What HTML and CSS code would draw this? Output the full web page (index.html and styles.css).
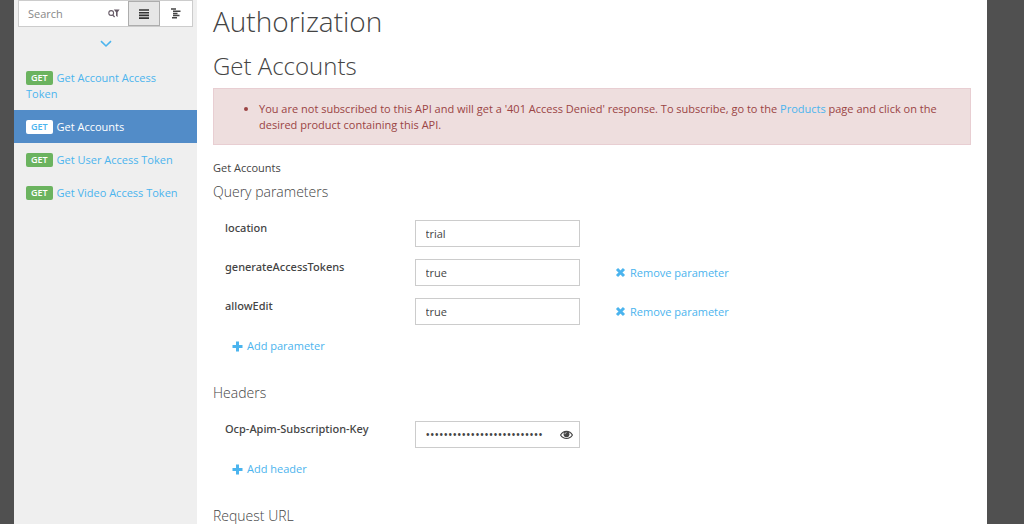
FILE: index.html
```html
<!DOCTYPE html>
<html lang="en">
<head>
    <title>Authorization - Get Accounts</title>
    <meta charset="UTF-8">
    <link rel="stylesheet" href="styles.css">
</head>
<body>
    <div class="page">
        <!-- Operations list -->
        <nav class="sidebar">
            <div class="search-group">
                <div class="search-box">
                    <input type="text" class="search-input" placeholder="Search" aria-label="Search">
                    <button type="button" class="filter-btn" aria-label="Filter">
                        <svg width="12" height="9" viewBox="0 0 12 9"><circle cx="3.2" cy="4" r="2.4" fill="none" stroke="#665a66" stroke-width="1.1"/><path d="M4.6 5.8L6.6 8" stroke="#665a66" stroke-width="1.2"/><path d="M5.8 0.5H11.6L9.6 3.2V8L8 6.8V3.2z" fill="#665a66"/></svg>
                    </button>
                </div>
                <button type="button" class="view-btn active" aria-label="List view">
                    <svg width="10" height="10" viewBox="0 0 10 10"><path d="M0 1H10M0 3.7H10M0 6.4H10M0 9.1H10" stroke="#333" stroke-width="1.6"/></svg>
                </button>
                <button type="button" class="view-btn" aria-label="Tree view">
                    <svg width="10" height="11" viewBox="0 0 10 11"><path d="M0 1H5M2 3.2H9.5M2 5.4H6.5M2 7.6H8.5M1 9.8H6" stroke="#444" stroke-width="1.5"/></svg>
                </button>
            </div>
            <button type="button" class="expand-btn" aria-label="Show more">
                <svg width="12" height="8" viewBox="0 0 12 8"><path d="M1 1.2L6 6L11 1.2" fill="none" stroke="#4bb4ee" stroke-width="1.6"/></svg>
            </button>
            <ul class="operations">
                <li><a href="#"><span class="badge">GET</span> Get Account Access Token</a></li>
                <li><a href="#" class="active"><span class="badge">GET</span> Get Accounts</a></li>
                <li><a href="#"><span class="badge">GET</span> Get User Access Token</a></li>
                <li><a href="#"><span class="badge">GET</span> Get Video Access Token</a></li>
            </ul>
        </nav>

        <!-- Console -->
        <main class="content">
            <h1>Authorization</h1>
            <h2>Get Accounts</h2>
            <div class="alert">
                <ul>
                    <li>You are not subscribed to this API and will get a '401 Access Denied' response. To subscribe, go to the <a href="#">Products</a> page and click on the desired product containing this API.</li>
                </ul>
            </div>
            <p class="description">Get Accounts</p>

            <form>
                <h3>Query parameters</h3>
                <div class="form-row">
                    <label for="location">location</label>
                    <div class="field"><input type="text" id="location" value="trial"></div>
                </div>
                <div class="form-row">
                    <label for="generateAccessTokens">generateAccessTokens</label>
                    <div class="field"><input type="text" id="generateAccessTokens" value="true"></div>
                    <a href="#" class="action"><svg width="11" height="11" viewBox="0 0 11 11"><path d="M2 2L9 9M9 2L2 9" stroke="#4bb4ee" stroke-width="3"/></svg>Remove parameter</a>
                </div>
                <div class="form-row">
                    <label for="allowEdit">allowEdit</label>
                    <div class="field"><input type="text" id="allowEdit" value="true"></div>
                    <a href="#" class="action"><svg width="11" height="11" viewBox="0 0 11 11"><path d="M2 2L9 9M9 2L2 9" stroke="#4bb4ee" stroke-width="3"/></svg>Remove parameter</a>
                </div>
                <a href="#" class="add"><svg width="11" height="11" viewBox="0 0 11 11"><path d="M5.5 0.5V10.5M0.5 5.5H10.5" stroke="#4bb4ee" stroke-width="3"/></svg>Add parameter</a>

                <h3>Headers</h3>
                <div class="form-row">
                    <label for="subscriptionKey">Ocp-Apim-Subscription-Key</label>
                    <div class="field key-field">
                        <input type="password" id="subscriptionKey" value="abcdefghijklmnopqrstuvwxyz">
                        <button type="button" class="eye-btn" aria-label="Show key">
                            <svg width="13" height="10" viewBox="0 0 13 10"><path d="M0.6 5C3.4 0.2 9.6 0.2 12.4 5C9.6 9.6 3.4 9.6 0.6 5z" fill="none" stroke="#444" stroke-width="1.2"/><circle cx="6.5" cy="4.2" r="2.9" fill="#444"/><path d="M5 4.2C5 3.2 5.6 2.6 6.5 2.6" fill="none" stroke="#fff" stroke-width="0.7"/></svg>
                        </button>
                    </div>
                </div>
                <a href="#" class="add"><svg width="11" height="11" viewBox="0 0 11 11"><path d="M5.5 0.5V10.5M0.5 5.5H10.5" stroke="#4bb4ee" stroke-width="3"/></svg>Add header</a>

                <h3>Request URL</h3>
            </form>
        </main>
    </div>
</body>
</html>
```

FILE: styles.css
```css
* {
    box-sizing: border-box;
}
body {
    margin: 0;
    padding: 0 37px 0 14px;
    background-color: #505050;
    color: #444;
    font-family: "Open Sans", "Noto Sans", sans-serif;
    font-size: 11px;
    line-height: 16px;
}
a {
    color: #4bb4ee;
    text-decoration: none;
}
ul {
    margin: 0;
    padding: 0;
}
button, input {
    font: inherit;
    color: inherit;
}
button {
    display: flex;
    align-items: center;
    justify-content: center;
    padding: 0;
    border: none;
    background: none;
    cursor: pointer;
}
svg {
    flex: none;
}
.page {
    display: flex;
    min-height: 100vh;
    background-color: #fff;
}

/* Sidebar */
.sidebar {
    flex: none;
    width: 183px;
    background-color: #efefef;
}
.search-group {
    display: flex;
    height: 27px;
    margin: 0 4px;
    border: 1px solid #ccc;
    background-color: #fff;
}
.search-box {
    display: flex;
    flex: 1;
    min-width: 0;
    padding: 0 8px 0 9px;
}
.search-input {
    flex: 1;
    min-width: 0;
    padding: 0;
    border: none;
    outline: none;
    background: none;
}
.search-input::placeholder {
    color: #888;
}
.view-btn {
    width: 32px;
}
.view-btn.active {
    background-color: #e6e6e6;
    border: 1px solid #adadad;
}
.expand-btn {
    width: 100%;
    height: 34px;
}
.operations {
    list-style: none;
}
.operations a {
    display: block;
    padding: 9px 12px 8px;
}
.operations a.active {
    background-color: #528cc8;
    color: #fff;
}
.badge {
    display: inline-block;
    margin-right: 1px;
    padding: 0 5px;
    border-radius: 2px;
    background-color: #6bb35f;
    color: #fff;
    font-size: 9px;
    font-weight: 600;
    line-height: 14px;
    vertical-align: 1px;
}
.active .badge {
    background-color: #fff;
    color: #4bb4ee;
}

/* Content */
.content {
    flex: 1;
    min-width: 0;
    padding: 0 16px;
}
h1, h2, h3 {
    margin: 0;
    font-weight: 300;
}
h1 {
    font-size: 28px;
    line-height: 42px;
}
h2 {
    padding: 6px 0 4px;
    font-size: 24px;
    line-height: 36px;
}
h3 {
    margin-bottom: 16px;
    font-size: 14px;
    line-height: 24px;
}
.alert {
    padding: 12px 24px 11px 45px;
    border: 1px solid #e8ced2;
    background-color: #eedede;
    color: #9b4444;
}
.description {
    margin: 15px 0 4px;
}
.form-row {
    display: grid;
    grid-template-columns: repeat(4, 1fr);
    padding-bottom: 12px;
}
.form-row label {
    padding-left: 12px;
    font-family: "Noto Sans", sans-serif;
    font-weight: 500;
    white-space: nowrap;
}
.field {
    padding: 0 12px;
}
.field input {
    display: block;
    width: 100%;
    height: 27px;
    padding: 0 10px;
    border: 1px solid #ccc;
    background-color: #fff;
    outline: none;
}
.action, .add {
    display: flex;
    align-items: center;
    gap: 4px;
}
.action {
    height: 27px;
    padding-left: 23px;
    white-space: nowrap;
}
.add {
    width: fit-content;
    margin: 1px 0 27px 19px;
}
.key-field {
    position: relative;
}
.key-field input {
    padding-right: 32px;
    font-size: 12px;
}
.eye-btn {
    position: absolute;
    top: 0;
    right: 12px;
    width: 27px;
    height: 27px;
}
```
